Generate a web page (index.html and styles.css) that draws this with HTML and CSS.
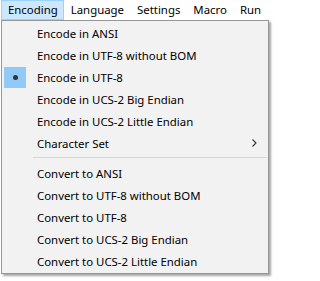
FILE: index.html
```html
<!DOCTYPE html>
<html>
<head>
<meta charset="utf-8">
<link rel="stylesheet" href="styles.css">
</head>
<body>
<div class="menubar">
  <span class="mb-item active">Encoding</span>
  <span class="mb-item">Language</span>
  <span class="mb-item">Settings</span>
  <span class="mb-item">Macro</span>
  <span class="mb-item">Run</span>
</div>
<div class="dropdown">
  <div class="item"><span class="check"></span><span class="label">Encode in ANSI</span></div>
  <div class="item"><span class="check"></span><span class="label">Encode in UTF-8 without BOM</span></div>
  <div class="item"><span class="check on"><span class="dot"></span></span><span class="label">Encode in UTF-8</span></div>
  <div class="item"><span class="check"></span><span class="label">Encode in UCS-2 Big Endian</span></div>
  <div class="item"><span class="check"></span><span class="label">Encode in UCS-2 Little Endian</span></div>
  <div class="item"><span class="check"></span><span class="label">Character Set</span>
    <svg class="chev" width="5" height="8" viewBox="0 0 5 8"><path d="M0.5 0.5 L4 4 L0.5 7.5" fill="none" stroke="#333" stroke-width="1.1"/></svg>
  </div>
  <div class="sep"></div>
  <div class="item"><span class="check"></span><span class="label">Convert to ANSI</span></div>
  <div class="item"><span class="check"></span><span class="label">Convert to UTF-8 without BOM</span></div>
  <div class="item"><span class="check"></span><span class="label">Convert to UTF-8</span></div>
  <div class="item"><span class="check"></span><span class="label">Convert to UCS-2 Big Endian</span></div>
  <div class="item"><span class="check"></span><span class="label">Convert to UCS-2 Little Endian</span></div>
</div>
</body>
</html>
```

FILE: styles.css
```css
html, body {
  margin: 0;
  padding: 0;
  background: #ffffff;
}
body {
  font-family: "Noto Sans", "Open Sans", sans-serif;
  font-size: 11.4px;
  color: #000;
  width: 274px;
  height: 281px;
  overflow: hidden;
}
.menubar {
  display: flex;
  height: 20px;
  align-items: stretch;
  padding-left: 1px;
}
.mb-item {
  display: flex;
  align-items: center;
  padding: 0 5px 1px 6px;
  border: 1px solid transparent;
  line-height: 18px;
}
.mb-item.active {
  background: #cce8ff;
  border-color: #99d1ff;
}
.dropdown {
  margin-left: 1px;
  width: 266px;
  background: #f2f2f2;
  border: 1px solid #979797;
  padding: 1px 0;
  box-shadow: 2px 2px 2px rgba(0,0,0,0.35);
}
.item {
  display: flex;
  align-items: center;
  height: 22px;
}
.check {
  width: 22px;
  height: 21px;
  margin-left: 2px;
  margin-right: 11px;
  display: flex;
  align-items: center;
  justify-content: center;
}
.check.on {
  background: #91c9f7;
}
.dot {
  width: 5px;
  height: 5px;
  border-radius: 50%;
  background: #333;
}
.label {
  white-space: nowrap;
}
.chev {
  margin-left: auto;
  margin-right: 11px;
}
.sep {
  height: 1px;
  background: #d7d7d7;
  margin: 3px 1px 4px 31px;
}
```
